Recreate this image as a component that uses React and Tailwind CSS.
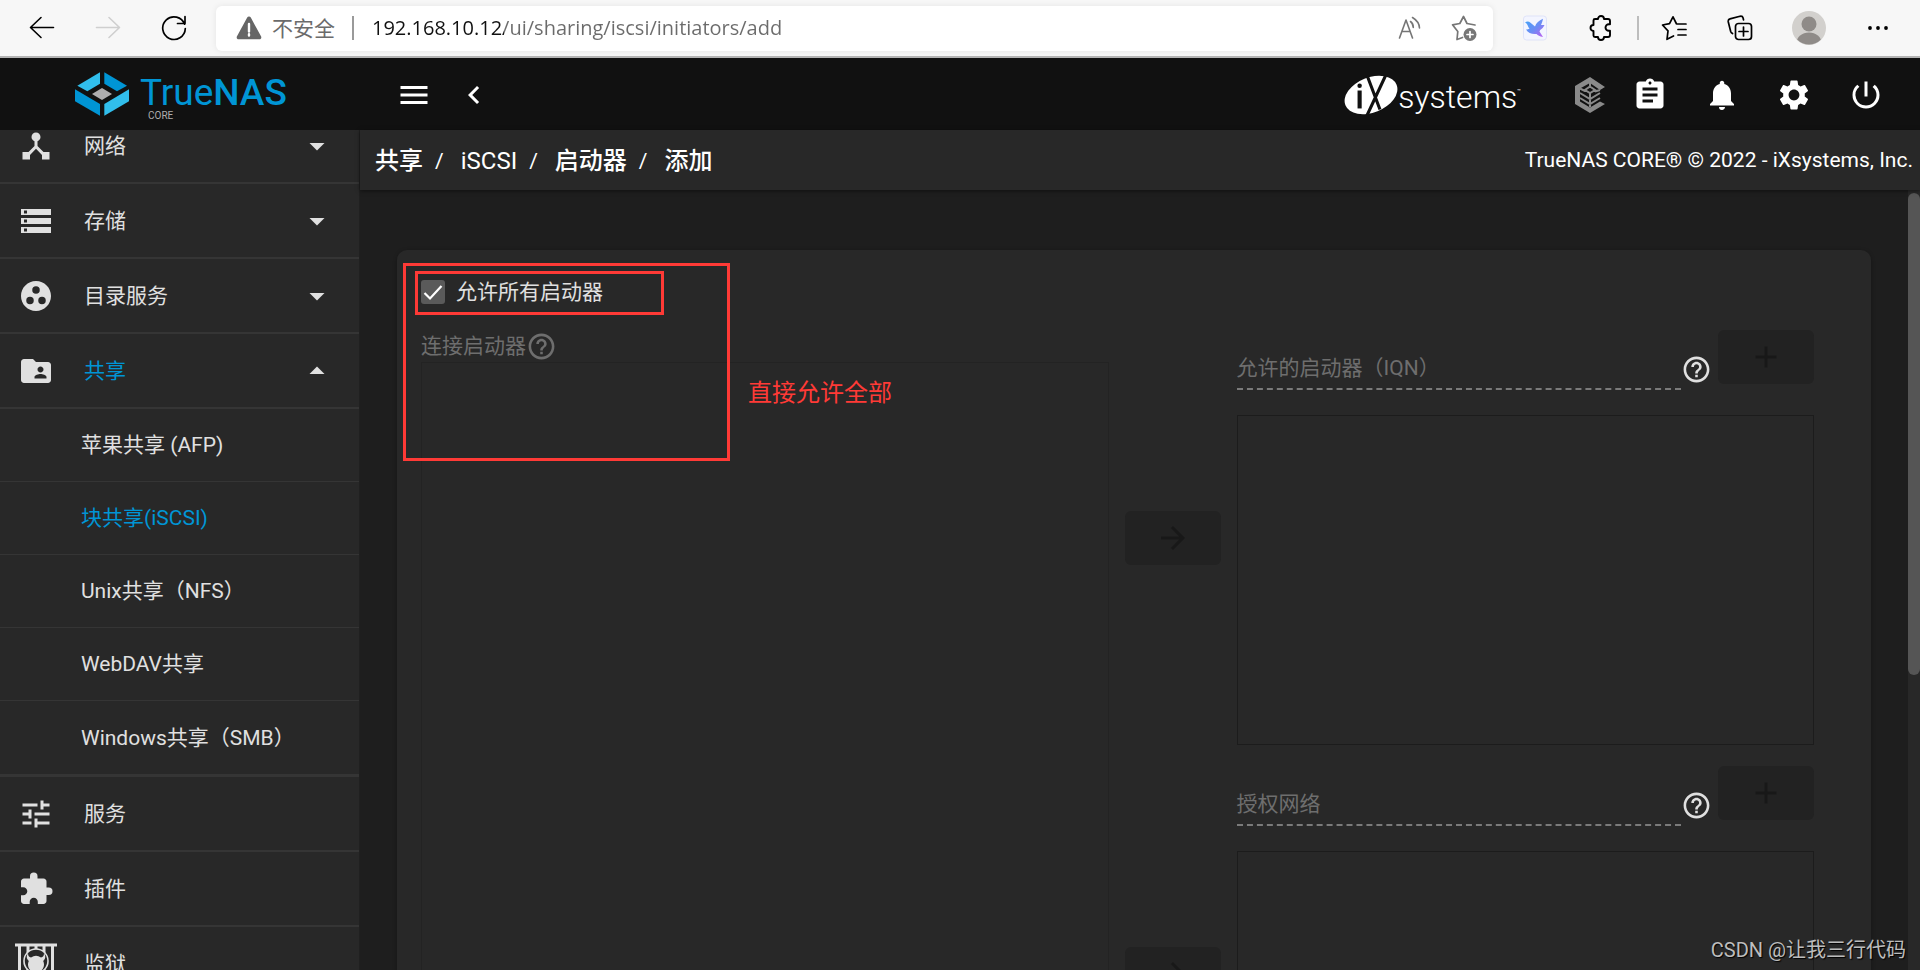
import React from "react";
import {
  MdAdd,
  MdArrowDropDown,
  MdArrowDropUp,
  MdArrowForward,
  MdAssignment,
  MdChevronLeft,
  MdDeviceHub,
  MdExtension,
  MdFolderShared,
  MdGroupWork,
  MdHelpOutline,
  MdMenu,
  MdNotifications,
  MdPowerSettingsNew,
  MdSettings,
  MdStorage,
  MdTune,
} from "react-icons/md";

/* ---------- browser toolbar ---------- */

function ToolButton({ label, children }) {
  return (
    <button type="button" aria-label={label} className="flex h-full w-[66px] shrink-0 items-center justify-center text-black">
      {children}
    </button>
  );
}

const line = { fill: "none", stroke: "currentColor", strokeLinecap: "round", strokeLinejoin: "round" };

function BrowserBar() {
  return (
    <div className="flex h-[58px] shrink-0 items-center border-b-2 border-[#b4b4b4] bg-[#f7f7f7] pr-[9px] pl-[9px]">
      <ToolButton label="后退">
        <svg width="26" height="26" viewBox="0 0 26 26" strokeWidth="1.6" {...line}>
          <path d="M24.500 12.500H1.500M12 2.500L1.500 12.500L12 22.500" />
        </svg>
      </ToolButton>
      <ToolButton label="前进">
        <svg className="text-[#cfcfcf]" width="26" height="26" viewBox="0 0 26 26" strokeWidth="1.6" {...line}>
          <path d="M1.500 12.500H24.500M14 2.500L24.500 12.500L14 22.500" />
        </svg>
      </ToolButton>
      <ToolButton label="刷新">
        <svg width="26" height="26" viewBox="0 0 26 26" strokeWidth="1.7" {...line}>
          <path d="M23.600 9.200A11.300 11.300 0 1 0 24.300 13.500M24 1.500V8.500H16.500" />
        </svg>
      </ToolButton>
      <div className="mr-[9px] ml-[9px] flex h-[45px] min-w-0 flex-1 items-center rounded-md bg-white pr-[2px] pl-[20px] font-['Open_Sans','Noto_Sans_CJK_SC',sans-serif] shadow-[0_0_6px_rgba(0,0,0,0.08)]">
        <svg width="26" height="24" viewBox="0 0 26 24">
          <path d="M11.200 1.600a2.100 2.100 0 0 1 3.600 0L25 20.300c.8 1.400 0 3-1.600 3H2.600C1 23.300.2 21.700 1 20.300z" fill="#666" />
          <path d="M13 8v7.500M13 18.300v1.200" stroke="#fff" strokeWidth="2.400" strokeLinecap="round" />
        </svg>
        <span className="ml-[10px] text-[21px] leading-7 text-[#6b6b6b]">不安全</span>
        <span className="ml-[17px] h-6 w-[2px] bg-[#9a9a9a]" />
        <input
          type="text"
          aria-label="地址栏"
          readOnly
          value="192.168.10.12/ui/sharing/iscsi/initiators/add"
          className="ml-[18px] h-9 min-w-0 flex-1 bg-[linear-gradient(90deg,#111_132px,#6b6b6b_132px)] bg-clip-text pb-[2px] text-xl text-transparent outline-none"
        />
        <button type="button" aria-label="大声朗读" className="flex w-[54px] justify-center text-[#767676]">
          <svg width="24" height="24" viewBox="0 0 24 24" strokeWidth="1.600" {...line}>
            <path d="M1.500 22L8 4l6.500 18M3.900 15.500h8.300M12.500 5.500c1.800 1.300 2.800 3.500 2.800 6M14.500 1.500c3.800 2.300 6.800 6 7 10.500" />
          </svg>
        </button>
        <button type="button" aria-label="添加到收藏夹" className="flex w-[54px] justify-center text-[#767676]">
          <svg width="26" height="26" viewBox="0 0 26 26" strokeWidth="1.700" {...line}>
            <path d="M11.500 22.500L6 24.500l.8-8L1.500 9.800l7.300-1.300L12.500 1.500l3.500 7 8 1.500" />
            <circle cx="19" cy="19.500" r="6.500" fill="currentColor" stroke="none" />
            <path d="M19 16.500v6M16 19.500h6" stroke="#fff" />
          </svg>
        </button>
      </div>
      <ToolButton label="飞鸟扩展">
        <svg width="24" height="26" viewBox="0 0 24 26">
          <defs>
            <linearGradient id="bird" x1="0" y1="0" x2="1" y2="1">
              <stop offset="0" stopColor="#3fa5f8" />
              <stop offset="0.550" stopColor="#6f8bf4" />
              <stop offset="1" stopColor="#c45cf0" />
            </linearGradient>
          </defs>
          <rect x="0.500" y="1" width="23" height="24" rx="3" fill="#f3f5ff" stroke="#dfe3f8" />
          <path d="M2 7.500c2-1.500 4-1 5.500.2L12 11.500C13 8 16 5.500 20 3.800c-.5 2.500-1 4-2 6.200l3.500 0c-1 2.300-2.500 3.800-4.300 5l-.7 1.500L20 22c-3.500-.5-5-1.800-6.500-3C9 19.500 5 18 3 14.500c1.500 0 2.500-.3 3.500-1C4.500 11.500 5 9 2 7.500z" fill="url(#bird)" />
        </svg>
      </ToolButton>
      <ToolButton label="扩展">
        <svg width="26" height="26" viewBox="0 0 26 26" strokeWidth="1.900" {...line}>
          <path d="M5.500 5.500a1.500 1.500 0 0 1 1.500-1.500h3a3 3 0 0 1 6 0h4a2 2 0 0 1 2 2v3.200h-1.200a3.300 3.300 0 0 0 0 6.600H22V20a2 2 0 0 1-2 2h-4a3 3 0 0 1-6 0H7a1.500 1.500 0 0 1-1.500-1.500V16a3 3 0 0 1 0-6z" />
        </svg>
      </ToolButton>
      <span className="mr-[2px] ml-[3px] h-6 w-[2px] shrink-0 bg-[#bdbdbd]" />
      <ToolButton label="收藏夹">
        <svg width="26" height="26" viewBox="0 0 26 26" strokeWidth="1.700" {...line}>
          <path d="M12.500 21L6 24.300l1-8.500L1.500 10l7-1.300L12 1.800l3.300 6.700M16 9h9M17 14.500h8M17 20h8" />
        </svg>
      </ToolButton>
      <ToolButton label="集锦">
        <svg width="26" height="26" viewBox="0 0 26 26" strokeWidth="1.700" {...line}>
          <path d="M5.500 18.500C4.500 18 4 17.500 3.700 16.500L1.300 7C1 5.500 1.500 4.300 3 3.900L13 1.300c1.500-.3 2.700.2 3.100 1.700l.4 1.800" />
          <rect x="8.500" y="8.500" width="16" height="16" rx="3" />
          <path d="M16.500 12v9M12 16.500h9" />
        </svg>
      </ToolButton>
      <span className="w-[3px] shrink-0" />
      <ToolButton label="个人资料">
        <svg width="34" height="34" viewBox="0 0 34 34">
          <defs>
            <clipPath id="avatar">
              <circle cx="17" cy="17" r="16.500" />
            </clipPath>
          </defs>
          <circle cx="17" cy="17" r="17" fill="#d2d0cd" />
          <circle cx="17" cy="13" r="7.500" fill="#8f8b88" />
          <ellipse cx="17" cy="32" rx="12.500" ry="10.500" fill="#8f8b88" clipPath="url(#avatar)" />
        </svg>
      </ToolButton>
      <span className="w-[3px] shrink-0" />
      <ToolButton label="设置及其他">
        <svg width="20" height="6" viewBox="0 0 20 6">
          <circle cx="2" cy="3" r="1.900" />
          <circle cx="10" cy="3" r="1.900" />
          <circle cx="18" cy="3" r="1.900" />
        </svg>
      </ToolButton>
    </div>
  );
}

/* ---------- application header ---------- */

function TrueNasLogo() {
  return (
    <a href="#dashboard" className="flex h-full w-[360px] shrink-0 items-center pl-[75px]">
      <svg width="54" height="44" viewBox="225 216 162 132">
        <path d="M300 217L232 257L262 274L300 251z" fill="#31beec" />
        <path d="M313 217L381 257L351 274L313 251z" fill="#0095d5" />
        <path d="M225 268L300 312V347L225 304z" fill="#0095d5" />
        <path d="M387 268L313 312V347L387 304z" fill="#31beec" />
        <path d="M306 264L336 282L306 300L276 282z" fill="#aeadae" />
      </svg>
      <span className="ml-[11px] flex flex-col pt-[7px]">
        <span className="text-[37px] leading-9 text-[#0095d5]">
          True<span className="font-medium">NAS</span>
        </span>
        <span className="pl-[8px] text-[10px] leading-[10px] text-[#aeadae]">CORE</span>
      </span>
    </a>
  );
}

function IxLogo() {
  return (
    <a href="#ixsystems" className="flex items-center text-white">
      <svg width="54" height="40" viewBox="0 0 156 116">
        <g transform="rotate(-22 78 58)">
          <ellipse cx="78" cy="58" rx="80" ry="51" fill="#fff" />
        </g>
        <circle cx="45" cy="31" r="6.500" fill="#111" />
        <path d="M45 45V97" stroke="#111" strokeWidth="12" />
        <path d="M67 2L104 100M121 0L66 118" fill="none" stroke="#111" strokeWidth="9" />
      </svg>
      <span className="pt-[3px] text-[32px] leading-[36px] font-light">systems</span>
      <span className="mb-[8px] text-[6px] leading-[8px]">™</span>
    </a>
  );
}

function TrueCommandIcon() {
  return (
    <svg width="30" height="36" viewBox="0 0 30 36">
      <path d="M15 0L30 10L25 13L15 6L5 11.500V24.500L15 30.500L25 24.500L30 27L15 36L0 27V9z" fill="#8a8a8a" />
      <path
        d="M15 6v3.500M5 11.500l5 2.500M25 13l-5 1.500M15 9.500L20 13L15 16L10 13zM5 16l10 6l10-6M5 21l10 6l10-6M15 16v14"
        fill="none"
        stroke="#8a8a8a"
        strokeWidth="2"
      />
    </svg>
  );
}

function HeaderButton({ label, children }) {
  return (
    <button type="button" aria-label={label} className="flex h-full w-[72px] items-center justify-center text-4xl text-white">
      {children}
    </button>
  );
}

function AppHeader() {
  return (
    <header className="flex h-[72px] shrink-0 items-center bg-[#111111]">
      <TrueNasLogo />
      <div className="flex h-full items-center gap-6 pt-[2px] pl-[36px] text-4xl text-white">
        <button type="button" aria-label="菜单">
          <MdMenu />
        </button>
        <button type="button" aria-label="收起">
          <MdChevronLeft />
        </button>
      </div>
      <div className="ml-auto flex h-full items-center pt-[2px] pr-[18px]">
        <IxLogo />
        <button type="button" aria-label="TrueCommand" className="mr-[9px] ml-[54px]">
          <TrueCommandIcon />
        </button>
        <HeaderButton label="任务">
          <MdAssignment />
        </HeaderButton>
        <HeaderButton label="通知">
          <MdNotifications />
        </HeaderButton>
        <HeaderButton label="设置">
          <MdSettings />
        </HeaderButton>
        <HeaderButton label="电源">
          <MdPowerSettingsNew />
        </HeaderButton>
      </div>
    </header>
  );
}

/* ---------- sidebar ---------- */

function JailIcon() {
  return (
    <svg width="42" height="42" viewBox="0 0 42 42" className="-mx-[3px]">
      <path d="M0 .5h42v3H0zM0 38.500h42v3H0z" fill="#e0e0e0" />
      <path d="M4.500 3v36M13 3v36M21 3v36M29 3v36M37.500 3v36" stroke="#e0e0e0" strokeWidth="3" />
      <circle cx="21" cy="18" r="12" fill="#282828" stroke="#e0e0e0" strokeWidth="1.600" />
      <path d="M13 10c0 3 1 4 3 4.500a9 9 0 0 1 10 0c2-.5 3-1.500 3-4.500c2 3 1.500 6-.8 8A8 8 0 1 1 13.800 18C11.500 16 11 13 13 10z" fill="#e0e0e0" />
    </svg>
  );
}

function NavRow({ icon, label, caret, active }) {
  return (
    <a href={"#" + label} className="flex h-[75px] items-center border-b-2 border-[#353535] pr-[24px] pl-[18px] text-4xl text-[#e0e0e0]">
      {icon}
      <span className={active ? "ml-[30px] text-[21px] leading-7 text-[#0095d5]" : "ml-[30px] text-[21px] leading-7"}>{label}</span>
      {caret && <span className="ml-auto">{caret}</span>}
    </a>
  );
}

const shares = ["苹果共享 (AFP)", "块共享(iSCSI)", "Unix共享（NFS）", "WebDAV共享", "Windows共享（SMB）"];

function Sidebar() {
  return (
    <aside className="w-[360px] shrink-0 overflow-hidden border-r border-[#202020] bg-[#282828]">
      <nav className="-mt-[21px]">
        <NavRow icon={<MdDeviceHub />} label="网络" caret={<MdArrowDropDown />} />
        <NavRow icon={<MdStorage />} label="存储" caret={<MdArrowDropDown />} />
        <NavRow icon={<MdGroupWork />} label="目录服务" caret={<MdArrowDropDown />} />
        <NavRow icon={<MdFolderShared />} label="共享" caret={<MdArrowDropUp />} active />
        <ul className="border-b-3 border-[#353535]">
          {shares.map((s, i) => (
            <li key={s} className="h-[73px] border-b border-[#353535] last:border-b-0">
              <a
                href={"#" + s}
                className={
                  "flex h-full items-center pl-[81px] text-[21px] leading-7 " +
                  (i === 1 ? "text-[#0095d5]" : "text-[#e0e0e0]")
                }
              >
                {s}
              </a>
            </li>
          ))}
        </ul>
        <NavRow icon={<MdTune />} label="服务" />
        <NavRow icon={<MdExtension />} label="插件" />
        <NavRow icon={<JailIcon />} label="监狱" />
      </nav>
    </aside>
  );
}

/* ---------- form ---------- */

function ArrowButton() {
  return (
    <button type="button" disabled aria-label="移到右侧" className="flex h-[54px] w-24 items-center justify-center self-center rounded-md bg-[#222222] text-4xl text-[#181818]">
      <MdArrowForward />
    </button>
  );
}

function ListSection({ id, label }) {
  return (
    <section>
      <div className="flex h-[60px] items-start">
        <div className="relative flex h-full flex-1 items-end">
          <label htmlFor={id} className="absolute bottom-2 left-0 text-[21px] leading-7 text-[#6e6e6e]">
            {label}
          </label>
          <input id={id} type="text" disabled className="h-9 w-full border-b-2 border-dashed border-[#7a7a7a] bg-transparent" />
        </div>
        <MdHelpOutline className="mt-[24px] mr-[6px] h-[31px] w-[31px] text-[#e0e0e0]" />
        <button type="button" disabled aria-label={"添加" + label} className="flex h-[54px] w-24 items-center justify-center rounded-md bg-[#222222] text-4xl text-[#181818]">
          <MdAdd />
        </button>
      </div>
      <div className="mt-[25px] h-[330px] border border-[#1c1c1c]" />
    </section>
  );
}

function Content() {
  return (
    <div className="relative rounded-[10px] bg-[#282828] pt-[30px] pr-[57px] pb-[30px] pl-[24px] shadow-[0_1px_4px_rgba(0,0,0,0.3)]">
      <label className="flex h-6 items-center text-[21px] leading-6 text-[#e0e0e0]">
        <span className="relative mr-[11px] flex h-6 w-6">
          <input type="checkbox" defaultChecked className="peer h-6 w-6 appearance-none rounded-[3px] bg-[#5a5a5a]" />
          <svg className="pointer-events-none absolute inset-0 hidden peer-checked:block" width="24" height="24" viewBox="0 0 24 24">
            <path d="M3.500 13L9 18.500L20.500 6" fill="none" stroke="#fff" strokeWidth="2.200" />
          </svg>
        </span>
        允许所有启动器
      </label>
      <div className="mt-[26px] grid grid-cols-[25fr_96px_21fr] gap-x-4 gap-y-[21px]">
        <section className="row-span-2 flex flex-col">
          <h2 className="flex h-8 items-center text-[21px] leading-8 text-[#6e6e6e]">
            连接启动器
            <MdHelpOutline className="h-[31px] w-[31px]" />
          </h2>
          <div className="flex-1 border border-[#232323]" />
        </section>
        <ArrowButton />
        <ListSection id="iqn" label="允许的启动器（IQN）" />
        <ArrowButton />
        <ListSection id="network" label="授权网络" />
      </div>

      {/* annotation marks drawn over the form */}
      <div className="pointer-events-none absolute top-[13px] left-[6px] h-[198px] w-[327px] border-3 border-[#ff3a36]" />
      <div className="pointer-events-none absolute top-[21px] left-[18px] h-[44px] w-[249px] border-3 border-[#ff3a36]" />
      <p className="pointer-events-none absolute top-[127px] left-[351px] text-2xl text-[#ff3a36]">直接允许全部</p>
    </div>
  );
}

function Breadcrumb() {
  return (
    <div className="relative flex h-[60px] shrink-0 items-center justify-between bg-[#282828] pt-[2px] pr-[7px] pl-[15px] text-white shadow-[0_1px_4px_rgba(0,0,0,0.5)]">
      <nav className="flex items-center text-2xl">
        <a href="#sharing" className="font-medium">共享</a>
        <span className="mr-[17px] ml-[12px] text-[21px]">/</span>
        <a href="#iscsi">iSCSI</a>
        <span className="mr-[17px] ml-[12px] text-[21px]">/</span>
        <a href="#initiators" className="font-medium">启动器</a>
        <span className="mr-[17px] ml-[12px] text-[21px]">/</span>
        <a href="#add" className="font-medium">添加</a>
      </nav>
      <span className="text-[21px]">TrueNAS CORE® © 2022 - iXsystems, Inc.</span>
    </div>
  );
}

export default function App() {
  return (
    <div className="relative flex h-screen flex-col overflow-hidden bg-[#1e1e1e] font-['Roboto','Noto_Sans_CJK_SC',sans-serif]">
      <BrowserBar />
      <AppHeader />
      <div className="flex min-h-0 flex-1">
        <Sidebar />
        <main className="flex min-w-0 flex-1 flex-col">
          <Breadcrumb />
          <div className="flex min-h-0 flex-1">
            <div className="min-w-0 flex-1 overflow-hidden px-[37px] pt-[60px]">
              <Content />
            </div>
            <div className="w-3 shrink-0 bg-[#282828] pt-[3px]">
              <div className="h-[62%] rounded-full bg-[#555555]" />
            </div>
          </div>
        </main>
      </div>
      <span className="pointer-events-none absolute right-[14px] bottom-[6px] text-xl leading-7 text-[#bdbdbd] [text-shadow:1px_1px_1px_#000]">
        CSDN @让我三行代码
      </span>
    </div>
  );
}
